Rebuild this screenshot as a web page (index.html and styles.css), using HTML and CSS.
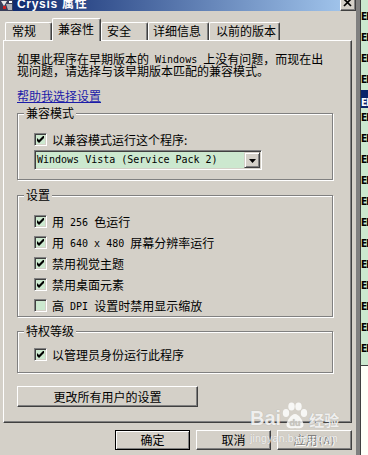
FILE: index.html
```html
<!DOCTYPE html>
<html lang="zh-CN">
<head>
<meta charset="utf-8">
<title>Crysis 属性</title>
<link rel="stylesheet" href="styles.css">
</head>
<body>
<div class="screen">
  <div class="dialog">
    <div class="titlebar">
      <svg class="appicon" width="13" height="11" viewBox="0 0 13 11">
        <rect x="0" y="0" width="13" height="11" fill="#3a3f5a"/>
        <path d="M1 1h6l-3 5z" fill="#e8e8e8"/>
        <path d="M6 4h6v6H8z" fill="#b0b0b8"/>
        <rect x="3" y="6" width="3" height="3" fill="#d02020"/>
        <rect x="9" y="1" width="3" height="2" fill="#ffffff"/>
      </svg>
      <span class="title">Crysis 属性</span>
      <span class="close">
        <svg width="14" height="9" viewBox="0 0 14 9"><path d="M3 -1L10 6M10 -1L3 6" stroke="#000" stroke-width="1.7" fill="none"/></svg>
      </span>
    </div>

    <div class="tabs">
      <div class="tab t1">常规</div>
      <div class="tab sel">兼容性</div>
      <div class="tab t3">安全</div>
      <div class="tab t4">详细信息</div>
      <div class="tab t5">以前的版本</div>
    </div>

    <div class="panel">
      <p class="desc">如果此程序在早期版本的<span class="m"> Windows </span>上没有问题，而现在出<br>现问题，请选择与该早期版本匹配的兼容模式。</p>
      <a class="link">帮助我选择设置</a>

      <div class="group g1">
        <div class="legend">兼容模式</div>
        <div class="check c-first">
          <span class="box"><svg width="7" height="7" viewBox="0 0 7 7"><path d="M0 2L2 4L7 -1V2L2 7L0 5Z" fill="#000"/></svg></span>
          <span>以兼容模式运行这个程序:</span>
        </div>
        <div class="combo">
          <span class="combo-text">Windows Vista (Service Pack 2)</span>
          <span class="combo-btn"><svg width="7" height="4" viewBox="0 0 7 4"><path d="M0 0H7L3.5 4Z" fill="#000"/></svg></span>
        </div>
      </div>

      <div class="group g2">
        <div class="legend">设置</div>
        <div class="checks">
          <div class="check">
            <span class="box"><svg width="7" height="7" viewBox="0 0 7 7"><path d="M0 2L2 4L7 -1V2L2 7L0 5Z" fill="#000"/></svg></span>
            <span>用<span class="m"> 256 </span>色运行</span>
          </div>
          <div class="check">
            <span class="box"><svg width="7" height="7" viewBox="0 0 7 7"><path d="M0 2L2 4L7 -1V2L2 7L0 5Z" fill="#000"/></svg></span>
            <span>用<span class="m"> 640 x 480 </span>屏幕分辨率运行</span>
          </div>
          <div class="check">
            <span class="box"><svg width="7" height="7" viewBox="0 0 7 7"><path d="M0 2L2 4L7 -1V2L2 7L0 5Z" fill="#000"/></svg></span>
            <span>禁用视觉主题</span>
          </div>
          <div class="check">
            <span class="box"><svg width="7" height="7" viewBox="0 0 7 7"><path d="M0 2L2 4L7 -1V2L2 7L0 5Z" fill="#000"/></svg></span>
            <span>禁用桌面元素</span>
          </div>
          <div class="check">
            <span class="box"></span>
            <span>高<span class="m"> DPI </span>设置时禁用显示缩放</span>
          </div>
        </div>
      </div>

      <div class="group g3">
        <div class="legend">特权等级</div>
        <div class="check c-first">
          <span class="box"><svg width="7" height="7" viewBox="0 0 7 7"><path d="M0 2L2 4L7 -1V2L2 7L0 5Z" fill="#000"/></svg></span>
          <span>以管理员身份运行此程序</span>
        </div>
      </div>

      <div class="btn wide">更改所有用户的设置</div>
    </div>

    <div class="buttons">
      <div class="btn default">确定</div>
      <div class="btn">取消</div>
      <div class="btn disabled">应用<span class="m">(A)</span></div>
    </div>
  </div>

  <div class="strip">
    <div class="list">
      <div class="row">El</div>
      <div class="row">El</div>
      <div class="row">El</div>
      <div class="row">El</div>
      <div class="row sel">El</div>
      <div class="row">El</div>
      <div class="row">El</div>
      <div class="row">El</div>
      <div class="row">El</div>
      <div class="row">El</div>
      <div class="row">El</div>
      <div class="row">El</div>
      <div class="row">El</div>
      <div class="row">El</div>
      <div class="row">El</div>
      <div class="row">El</div>
      <div class="row">El</div>
      <div class="row">El</div>
    </div>
    <div class="blank"></div>
  </div>

  <div class="watermark">
    <div class="wm-top">
      <span class="wm-bai">Bai</span>
      <svg class="wm-paw" width="26" height="28" viewBox="0 0 26 28">
        <ellipse cx="4" cy="11" rx="3.2" ry="4" />
        <ellipse cx="9.5" cy="4.5" rx="3.2" ry="4" />
        <ellipse cx="16.5" cy="4.5" rx="3.2" ry="4" />
        <ellipse cx="22" cy="11" rx="3.2" ry="4" />
        <path d="M13 12C9 12 5 19 4.5 22C4 26 8 27 13 26C18 27 22 26 21.5 22C21 19 17 12 13 12Z" />
        <text x="13" y="24" text-anchor="middle" class="wm-du">du</text>
      </svg>
      <span class="wm-jy">经验</span>
    </div>
    <div class="wm-url">jingyan.baidu.com</div>
  </div>
</div>
</body>
</html>
```

FILE: styles.css
```css
* {
  box-sizing: border-box;
}

html,
body {
  margin: 0;
  padding: 0;
}

body {
  width: 368px;
  height: 455px;
  overflow: hidden;
  background: #ffffff;
  font-family: "Noto Sans CJK SC", sans-serif;
  font-size: 12px;
  line-height: 12px;
  color: #000000;
}

.screen {
  position: relative;
  display: flex;
  width: 368px;
  height: 455px;
}

/* ---------- dialog frame ---------- */
.dialog {
  flex: none;
  width: 361px;
  height: 455px;
  display: flex;
  flex-direction: column;
  background: #d4d0c8;
  padding-right: 4px;
  border-right: 1px solid #404040;
  box-shadow: inset -4px 0 #808080;
}

.titlebar {
  flex: none;
  height: 11px;
  display: flex;
  align-items: flex-start;
  background: linear-gradient(to right, #0a246a, #a6caf0);
  overflow: hidden;
}

.appicon {
  flex: none;
  margin-right: 4px;
}

.title {
  margin-top: -2px;
  font-family: "Liberation Sans", "Noto Sans CJK SC", sans-serif;
  font-weight: bold;
  font-size: 12px;
  line-height: 12px;
  letter-spacing: 0.7px;
  color: #ffffff;
  white-space: nowrap;
}

.close {
  flex: none;
  margin-left: auto;
  width: 16px;
  height: 11px;
  display: flex;
  justify-content: center;
  align-items: flex-start;
  background: #d4d0c8;
  border-right: 1px solid #404040;
  border-bottom: 1px solid #404040;
  border-left: 1px solid #ffffff;
  box-shadow: inset -1px -1px #808080;
}

/* ---------- tabs ---------- */
.tabs {
  flex: none;
  height: 29px;
  display: flex;
  align-items: flex-end;
  padding-left: 5px;
}

.tab {
  flex: none;
  height: 18px;
  padding-top: 2px;
  border-top: 1px solid #ffffff;
  border-left: 1px solid #ffffff;
  border-right: 1px solid #404040;
  border-radius: 2px 2px 0 0;
  box-shadow: inset -1px 0 #808080;
  white-space: nowrap;
}

.t1 {
  width: 47px;
  padding-left: 6px;
}

.sel {
  position: relative;
  z-index: 1;
  width: 49px;
  height: 23px;
  margin-bottom: -1px;
  padding-top: 4px;
  padding-left: 5px;
  background: #d4d0c8;
}

.t3 {
  width: 47px;
  padding-left: 5px;
}

.t4 {
  width: 61px;
  padding-left: 4px;
}

.t5 {
  width: 71px;
  padding-left: 6px;
}

/* ---------- panel ---------- */
.panel {
  flex: none;
  margin-left: 3px;
  width: 349px;
  height: 383px;
  display: flex;
  flex-direction: column;
  align-items: flex-start;
  padding: 12px 0 0 13px;
  border: 1px solid;
  border-color: #ffffff #404040 #404040 #ffffff;
  box-shadow: inset -1px -1px #808080;
}

.desc {
  margin: 0;
  white-space: nowrap;
}

.m {
  font-family: "DejaVu Sans Mono", monospace;
  font-size: 10px;
  line-height: 1px;
  vertical-align: 1px;
  white-space: pre;
}

.link {
  margin-top: 13px;
  color: #1c1ca8;
  text-decoration: underline;
  text-underline-offset: 1px;
}

/* ---------- group boxes ---------- */
.group {
  width: 316px;
  display: flex;
  flex-direction: column;
  align-items: flex-start;
  border: 1px solid #808080;
  box-shadow: inset 1px 1px #ffffff, 1px 1px #ffffff;
}

.g1 {
  margin-top: 11px;
  padding-bottom: 9px;
}

.g2 {
  margin-top: 15px;
  padding-bottom: 4px;
}

.g3 {
  margin-top: 14px;
  padding-bottom: 11px;
}

.legend {
  margin: -7px 0 0 6px;
  padding: 0 2px;
  height: 12px;
  background: #d4d0c8;
  white-space: nowrap;
}

.g1 .c-first {
  margin-top: 14px;
}

.g3 .c-first {
  margin-top: 11px;
}

.checks {
  margin-top: 14px;
  display: flex;
  flex-direction: column;
  gap: 8px;
}

.check {
  height: 13px;
  margin-left: 16px;
  display: flex;
  align-items: center;
  gap: 5px;
  white-space: nowrap;
}

.box {
  flex: none;
  width: 13px;
  height: 13px;
  display: flex;
  align-items: center;
  justify-content: center;
  background: #cce8cf;
  border: 1px solid;
  border-color: #808080 #ffffff #ffffff #808080;
  box-shadow: inset 1px 1px #404040, inset -1px -1px #d4d0c8;
}

.box svg {
  display: block;
}

/* ---------- combo ---------- */
.combo {
  margin: 4px 0 0 16px;
  width: 228px;
  height: 20px;
  display: flex;
  align-items: center;
  padding: 1px;
  background: #cce8cf;
  border: 1px solid;
  border-color: #808080 #ffffff #ffffff #808080;
  box-shadow: inset 1px 1px #404040, inset -1px -1px #d4d0c8;
}

.combo-text {
  flex: 1;
  padding-left: 1px;
  font-family: "DejaVu Sans Mono", monospace;
  font-size: 10px;
  line-height: 16px;
  white-space: pre;
}

.combo-btn {
  flex: none;
  width: 16px;
  height: 16px;
  display: flex;
  align-items: center;
  justify-content: center;
  background: #d4d0c8;
  border: 1px solid;
  border-color: #d4d0c8 #404040 #404040 #d4d0c8;
  box-shadow: inset 1px 1px #ffffff, inset -1px -1px #808080;
}

.combo-btn svg {
  display: block;
  margin-top: 1px;
}

/* ---------- buttons ---------- */
.btn {
  flex: none;
  width: 75px;
  height: 20px;
  display: flex;
  align-items: center;
  justify-content: center;
  background: #d4d0c8;
  border: 1px solid;
  border-color: #ffffff #404040 #404040 #ffffff;
  box-shadow: inset -1px -1px #808080;
  white-space: nowrap;
}

.wide {
  margin-top: 13px;
  width: 181px;
  height: 21px;
}

.buttons {
  flex: none;
  margin: 7px 0 0 115px;
  display: flex;
  gap: 6px;
}

.default {
  border-color: #000000;
  box-shadow: inset 1px 1px #ffffff, inset -1px -1px #808080;
}

.disabled {
  color: #808080;
  text-shadow: 1px 1px #ffffff;
}

/* ---------- background strip on the right ---------- */
.strip {
  flex: 1;
  display: flex;
  flex-direction: column;
  min-width: 0;
}

.list {
  flex: none;
  height: 366px;
  padding-top: 6px;
  overflow: hidden;
  background: #cce8cf;
  border-bottom: 1px solid #404040;
}

.row {
  height: 21px;
  line-height: 21px;
  padding-left: 0;
  font-family: "DejaVu Sans Condensed", "DejaVu Sans", sans-serif;
  font-weight: bold;
  font-size: 10px;
  letter-spacing: -1px;
  white-space: nowrap;
  overflow: hidden;
}

.row.sel {
  height: 18px;
  line-height: 18px;
  background: #0a246a;
  color: #ffffff;
}

.blank {
  flex: 1;
  background: #fffff8;
}

/* ---------- watermark overlay ---------- */
.watermark {
  position: absolute;
  left: 250px;
  top: 400px;
  display: flex;
  flex-direction: column;
  color: rgba(255, 255, 255, 0.82);
  text-shadow: 0 0 1px rgba(120, 120, 120, 0.45);
  pointer-events: none;
}

.wm-top {
  display: flex;
  align-items: flex-end;
  height: 30px;
}

.wm-bai {
  font-family: "Liberation Sans", sans-serif;
  font-weight: bold;
  font-size: 20px;
  line-height: 20px;
  margin-bottom: 2px;
}

.wm-paw {
  fill: rgba(255, 255, 255, 0.82);
  margin: 0 1px;
}

.wm-du {
  font-family: "Liberation Sans", sans-serif;
  font-weight: bold;
  font-size: 9px;
  fill: #c8c4bc;
}

.wm-jy {
  font-family: "Noto Sans CJK SC", sans-serif;
  font-weight: bold;
  font-size: 15px;
  line-height: 16px;
  margin-bottom: 2px;
}

.wm-url {
  margin-top: 2px;
  font-family: "Liberation Sans", sans-serif;
  font-size: 10.5px;
  line-height: 12px;
  letter-spacing: 0.2px;
}
```
